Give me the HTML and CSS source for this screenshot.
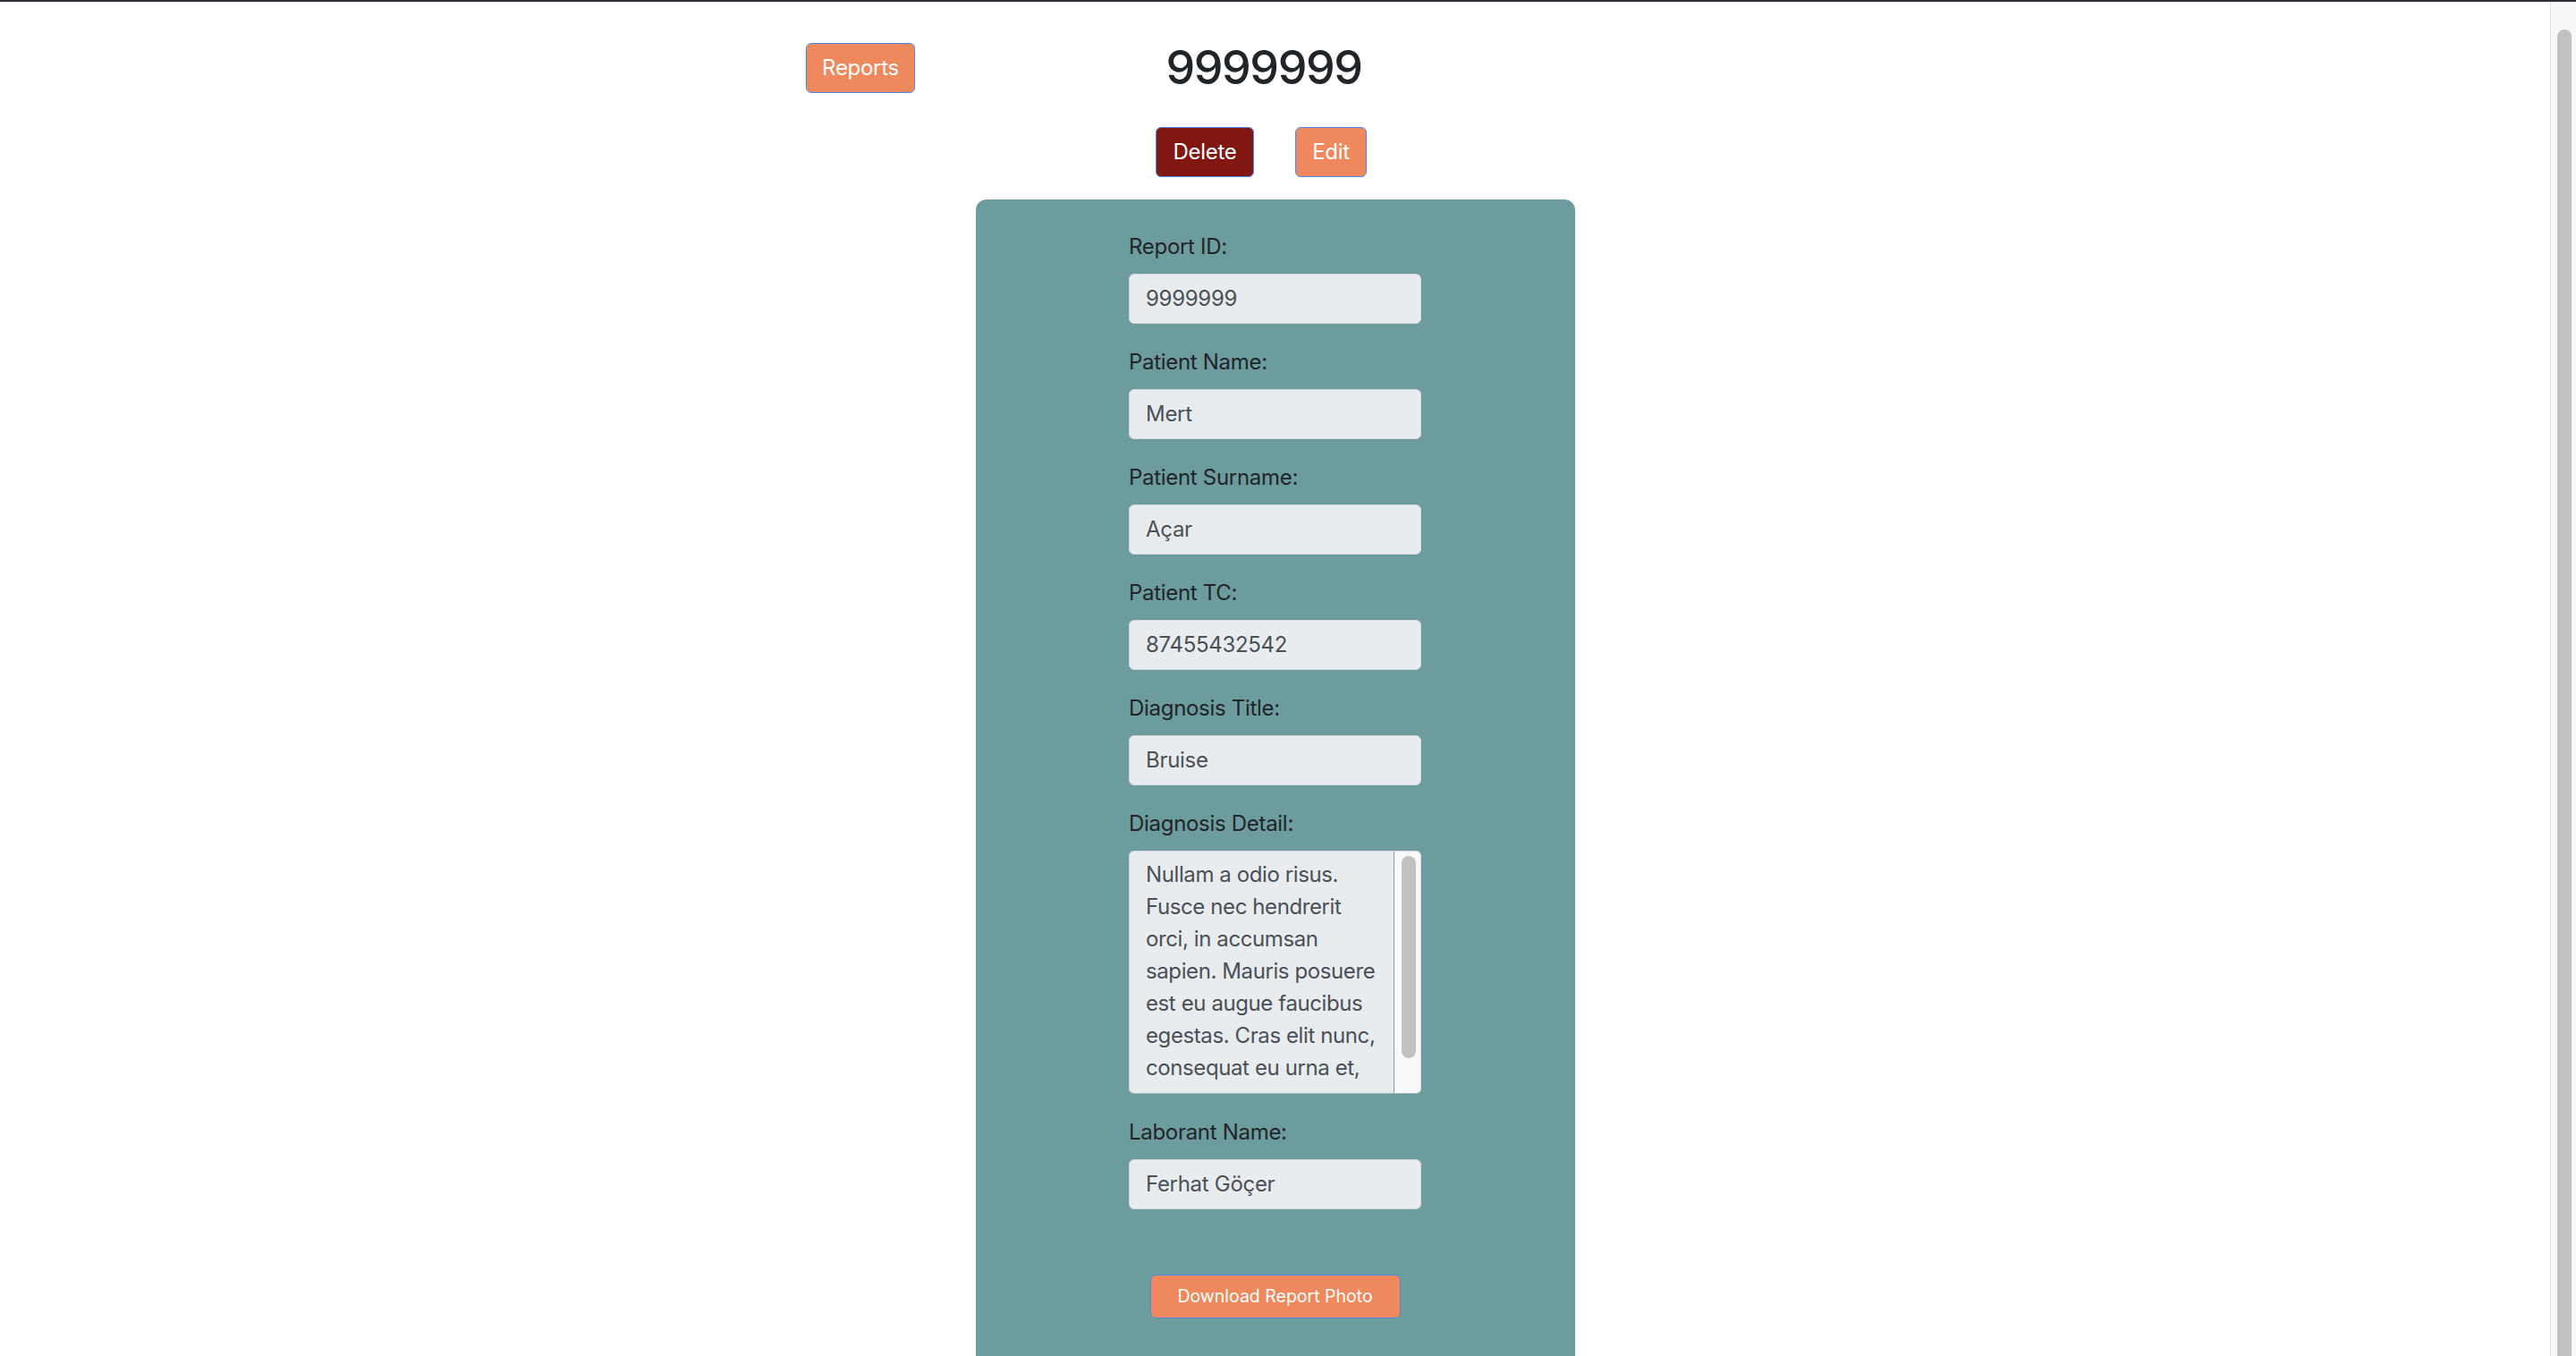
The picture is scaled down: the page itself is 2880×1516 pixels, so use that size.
FILE: index.html
```html
<!DOCTYPE html>
<html lang="en">
<head>
<meta charset="utf-8">
<title>Report 9999999</title>
<link rel="stylesheet" href="styles.css">
</head>
<body>
<div class="chrome-line"></div>
<div class="viewport">
  <main class="page">
    <header class="head">
      <div class="head-row">
        <a class="btn btn-orange btn-reports" href="#">Reports</a>
        <h1 class="title">9999999</h1>
        <span class="spacer"></span>
      </div>
      <div class="actions">
        <button class="btn btn-red btn-delete" type="button">Delete</button>
        <button class="btn btn-orange btn-edit" type="button">Edit</button>
      </div>
    </header>

    <section class="card">
      <div class="form">
        <div class="field">
          <label class="label">Report ID:</label>
          <div class="input">9999999</div>
        </div>
        <div class="field">
          <label class="label">Patient Name:</label>
          <div class="input">Mert</div>
        </div>
        <div class="field">
          <label class="label">Patient Surname:</label>
          <div class="input">Açar</div>
        </div>
        <div class="field">
          <label class="label">Patient TC:</label>
          <div class="input">87455432542</div>
        </div>
        <div class="field">
          <label class="label">Diagnosis Title:</label>
          <div class="input">Bruise</div>
        </div>
        <div class="field">
          <label class="label">Diagnosis Detail:</label>
          <div class="textarea">
            <div class="textarea-text">
              <span class="line">Nullam a odio risus.</span>
              <span class="line">Fusce nec hendrerit</span>
              <span class="line">orci, in accumsan</span>
              <span class="line">sapien. Mauris posuere</span>
              <span class="line">est eu augue faucibus</span>
              <span class="line">egestas. Cras elit nunc,</span>
              <span class="line">consequat eu urna et,</span>
            </div>
            <div class="ta-scroll"><div class="ta-thumb"></div></div>
          </div>
        </div>
        <div class="field">
          <label class="label">Laborant Name:</label>
          <div class="input">Ferhat Göçer</div>
        </div>
      </div>
      <div class="download-wrap">
        <button class="btn btn-orange btn-download" type="button">Download Report Photo</button>
      </div>
    </section>
  </main>
  <aside class="page-scroll"><div class="page-thumb"></div></aside>
</div>
</body>
</html>
```
FILE: styles.css
```css
html, body {
  margin: 0;
  padding: 0;
  height: 100%;
  overflow: hidden;
}

body {
  display: flex;
  flex-direction: column;
  background: #ffffff;
  font-family: Inter, "Liberation Sans", Arial, sans-serif;
  color: #212529;
}

.chrome-line {
  height: 2px;
  flex: none;
  background: #2c2e3a;
}

.viewport {
  flex: 1;
  display: flex;
  min-height: 0;
}

.page {
  flex: 1;
  min-width: 0;
  overflow: hidden;
  display: flex;
  flex-direction: column;
}

/* fake window scrollbar */
.page-scroll {
  width: 29px;
  flex: none;
  background: #f8f8f8;
  border-left: 1px solid #e2e2e2;
  padding: 31px 0 0 7px;
  box-sizing: border-box;
}

.page-thumb {
  width: 16px;
  height: 1600px;
  background: #c1c1c1;
  border-radius: 8px;
}

/* header */
.head {
  width: 1024px;
  margin-left: 901px;
  padding-top: 43px;
}

.head-row {
  display: grid;
  grid-template-columns: 1fr auto 1fr;
  align-items: center;
}

.title {
  margin: 0;
  font-size: 52px;
  line-height: 62px;
  font-weight: 500;
  color: #212529;
  letter-spacing: -1.5px;
}

.actions {
  display: flex;
  justify-content: center;
  gap: 46px;
  margin-top: 35px;
  padding-right: 6px;
}

.btn {
  display: inline-flex;
  align-items: center;
  justify-content: center;
  box-sizing: border-box;
  height: 56px;
  padding: 0;
  border: 1px solid #4a8af0;
  border-radius: 6px;
  font-family: Inter, "Liberation Sans", Arial, sans-serif;
  font-size: 24px;
  line-height: 36px;
  color: #ffffff;
  text-decoration: none;
  letter-spacing: -0.3px;
  cursor: pointer;
}

.btn-orange {
  background: #ef885c;
}

.btn-red {
  background: #801710;
}

.btn-reports {
  width: 122px;
  justify-self: start;
}

.btn-delete {
  width: 110px;
}

.btn-edit {
  width: 80px;
}

/* card */
.card {
  width: 670px;
  margin: 25px auto 0;
  flex: 1;
  background: #6c9c9d;
  border-radius: 12px 12px 0 0;
  padding-top: 35px;
  box-sizing: border-box;
}

.form {
  width: 327px;
  margin: 0 auto;
  display: flex;
  flex-direction: column;
  gap: 25px;
}

.field {
  display: flex;
  flex-direction: column;
  gap: 12px;
}

.label {
  font-size: 24px;
  line-height: 36px;
  color: #212529;
  letter-spacing: -0.3px;
}

.input {
  box-sizing: border-box;
  height: 56px;
  padding: 0 18px;
  display: flex;
  align-items: center;
  background: #e9ecef;
  border: 1px solid #d3d7db;
  border-radius: 6px;
  font-size: 24px;
  line-height: 36px;
  color: #495057;
  letter-spacing: -0.3px;
}

.textarea {
  box-sizing: border-box;
  height: 272px;
  display: flex;
  background: #e9ecef;
  border: 1px solid #d3d7db;
  border-bottom-color: #9fb7b8;
  border-radius: 6px;
  overflow: hidden;
}

.textarea-text {
  flex: 1;
  min-width: 0;
  padding: 8px 10px 0 18px;
  overflow: hidden;
  font-size: 24px;
  line-height: 36px;
  color: #495057;
  letter-spacing: -0.4px;
}

.line {
  display: block;
  white-space: nowrap;
}

.ta-scroll {
  width: 30px;
  flex: none;
  box-sizing: border-box;
  background: #f9f9f9;
  border-left: 1px solid #7fa3a4;
  padding: 5px 5px 0 8px;
}

.ta-thumb {
  width: 16px;
  height: 226px;
  background: #c1c1c1;
  border-radius: 8px;
}

.download-wrap {
  display: flex;
  justify-content: center;
  margin-top: 73px;
  padding-bottom: 77px;
}

.btn-download {
  width: 280px;
  height: 49px;
  font-size: 19.5px;
  line-height: 27px;
  letter-spacing: 0;
}
```
